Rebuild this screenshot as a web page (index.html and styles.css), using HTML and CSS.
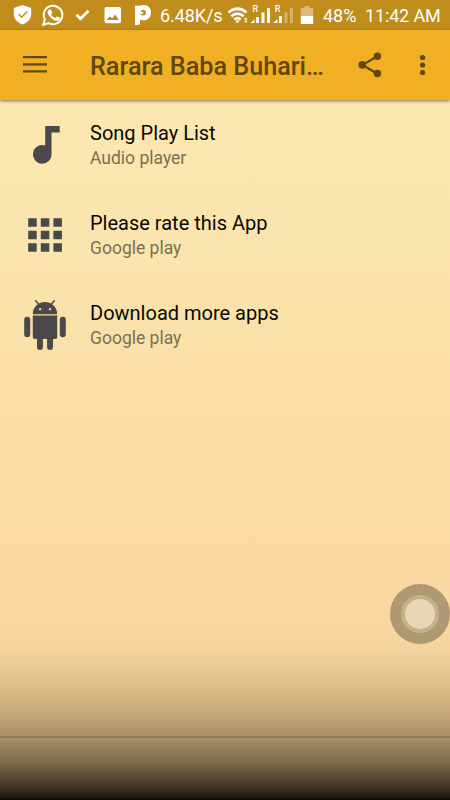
FILE: index.html
```
<!DOCTYPE html>
<html lang="en">
<head>
<meta charset="utf-8">
<title>Rarara Baba Buhari</title>
<link rel="stylesheet" href="styles.css">
</head>
<body>
<div class="screen">
  <header class="status">
    <svg class="notifications" width="160" height="30" viewBox="0 0 160 30">
      <path fill="#fff" d="M22.500 5L31.200 8V14C31.200 19 27.500 22.500 22.500 24.500C17.500 22.500 13.800 19 13.800 14V8Z"/>
      <path class="shield-check" d="M18.500 14.200l3.100 3 5.700-5.700"/>
      <path fill="none" stroke="#fff" stroke-width="2" d="M43.300 24.800l1.500-5.500a9.300 9.300 0 1 1 3.700 3.800Z"/>
      <path fill="#fff" d="M49.200 9.600h1.300q.5 0 .7.500l1 2.300q.1.500-.2.900l-.9 1.100q1.500 2.700 4.300 3.700l1.200-1.400q.3-.4.800-.2l2.300 1.100q.5.300.4.900-.4 2.300-3 2.500-2.600 0-5.600-2.600-3.600-3.200-4-5.900 0-1.900 1.700-2.900Z"/>
      <path fill="none" stroke="#fff" stroke-width="2.800" d="M76.500 14.700l4 4 8-8"/>
      <path fill="#fff" fill-rule="evenodd" d="M106.300 7h12.900q1.800 0 1.800 1.800v12.600q0 1.800-1.800 1.800h-12.900q-1.800 0-1.800-1.800V8.800q0-1.800 1.800-1.800ZM106.700 20h12.200l-3.700-5.500-3 4-2.300-2.300Z"/>
      <path fill="#fff" fill-rule="evenodd" d="M135 5.800h4.500Q141.500 5 144 5C148.300 5 151 8.300 151 12.700S148 20.300 144 20.300Q141.200 20.300 140 19.400V23q0 1.900-2 1.900h-3ZM143.100 9.800a2.900 2.900 0 1 0 .01 0Z"/>
      <path fill="#fff" d="M139.800 11.700h3.300v2h-3.300Z"/>
    </svg>
    <span class="speed">6.48K/s</span>
    <svg class="signals" width="92" height="30" viewBox="226 0 92 30">
      <g fill="none" stroke="#fff" stroke-width="2.700">
        <path d="M228.500 12.500q9-7.500 18 0"/>
        <path d="M231.300 16.300q6.200-5.200 12.400 0"/>
        <path d="M234.300 19.600q3.200-2.800 6.400 0"/>
      </g>
      <path fill="#fff" d="M235.500 20.900q2-1.500 4 0l-2 2.300ZM244 19.500l1.800-2.200 1.800 2.200ZM244 20.800h3.600l-1.800 2.200Z"/>
      <path fill="#fff" d="M250.500 23l4-3.500V23ZM256 17h3v6h-3ZM261.500 12.500h3V23h-3ZM267 8h3V23h-3ZM273 23l4.500-4V23Z"/>
      <path fill="#fff" d="M279 16h3V23h-3Z"/>
      <path fill="#fff" opacity=".35" d="M284.500 12.500h3V23h-3ZM290 8h3v15h-3Z"/>
      <text class="roaming" x="252.600" y="12">R</text>
      <text class="roaming" x="274.800" y="12">R</text>
      <path fill="#fff" opacity=".4" d="M304.500 6h5v2h3.700v8h-12.400V8h3.700Z"/>
      <path fill="#fff" d="M300.800 16h12.400v8h-12.400Z"/>
    </svg>
    <span class="battery">48%</span>
    <span class="clock">11:42 AM</span>
  </header>

  <div class="toolbar">
    <svg class="menu" width="24" height="18" viewBox="0 0 24 18">
      <path fill="#60470d" d="M0 0h24v2.300H0ZM0 7.300h24v2.300H0ZM0 14.300h24v2.300H0Z"/>
    </svg>
    <h1 class="title">Rarara Baba Buhari…</h1>
    <svg class="share" width="24" height="26" viewBox="0 0 24 26">
      <path fill="none" stroke="#60470d" stroke-width="2.200" d="M19.400 4.200L4.500 12.900l14.900 8.800"/>
      <g fill="#60470d"><circle cx="19.400" cy="4.300" r="3.700"/><circle cx="4.300" cy="12.900" r="3.800"/><circle cx="19.400" cy="21.500" r="3.700"/></g>
    </svg>
    <svg class="more" width="6" height="22" viewBox="0 0 6 22">
      <g fill="#60470d"><circle cx="2.600" cy="3.500" r="2.600"/><circle cx="2.600" cy="11" r="2.600"/><circle cx="2.600" cy="18.500" r="2.600"/></g>
    </svg>
  </div>

  <main class="list">
    <div class="row">
      <svg class="icon" width="90" height="90" viewBox="0 0 90 90">
        <path fill="#49494a" d="M45.200 26H59.700v6.500H51.500V54.300A9.300 9.300 0 1 1 45.200 45.600Z"/>
      </svg>
      <div class="label"><div class="name">Song Play List</div><div class="source">Audio player</div></div>
    </div>
    <div class="row">
      <svg class="icon" width="90" height="90" viewBox="0 0 90 90">
        <path fill="#49494a" d="M28.200 28.200h8.500v8.500h-8.500ZM40.800 28.200h8.500v8.500h-8.500ZM53.400 28.200h8.500v8.500h-8.500ZM28.200 40.800h8.500v8.500h-8.500ZM40.800 40.800h8.500v8.500h-8.500ZM53.400 40.800h8.500v8.500h-8.500ZM28.200 53.300h8.500v8.500h-8.500ZM40.800 53.300h8.500v8.500h-8.500ZM53.400 53.300h8.500v8.500h-8.500Z"/>
      </svg>
      <div class="label"><div class="name">Please rate this App</div><div class="source">Google play</div></div>
    </div>
    <div class="row">
      <svg class="icon" width="90" height="90" viewBox="0 0 90 90">
        <g fill="#49494a">
          <path fill-rule="evenodd" d="M32.800 34.200C33 27 38 22 45 22S57 27 57.200 34.200ZM40.100 27.900a1.200 1.200 0 1 0 .01 0ZM50 27.900a1.200 1.200 0 1 0 .01 0Z"/>
          <path d="M32.800 35.600H57.200V57q0 2-2 2H53v8a2.800 2.800 0 0 1-5.900 0v-8h-4.200v8a2.800 2.800 0 0 1-5.900 0v-8h-2.200q-2 0-2-2Z"/>
          <rect x="24.200" y="36.700" width="6" height="20.500" rx="3"/>
          <rect x="59.800" y="36.700" width="6" height="20.500" rx="3"/>
        </g>
        <path fill="none" stroke="#49494a" stroke-width="1.500" stroke-linecap="round" d="M39 24.500l-3.300-3.700M51 24.500l3.300-3.700"/>
      </svg>
      <div class="label"><div class="name">Download more apps</div><div class="source">Google play</div></div>
    </div>
  </main>
  <div class="divider"></div>
  <div class="assist"><div class="assist-core"></div></div>
</div>
</body>
</html>
```

FILE: styles.css
```
* { box-sizing: border-box; }
body { margin: 0; font-family: Roboto, sans-serif; }
.screen {
  position: relative;
  display: flex;
  flex-direction: column;
  width: 450px;
  height: 800px;
  overflow: hidden;
  background: linear-gradient(#fbe7b1 100px, #fbe6af 200px, #fae1aa 320px, #fadca5 450px, #fad9a1 600px, #f8d79e 640px, #edcd98 662px, #dfbf8c 685px, #c8ac7c 710px, #aa9069 736px, #a58b66 740px, #836f50 760px, #544632 779px, #2d261c 793px, #17120d 799px, #000 800px);
}
.status {
  display: flex;
  flex: none;
  height: 30px;
  background: #c08c1b;
  color: #fff;
  font-size: 18px;
  line-height: 32px;
  white-space: nowrap;
}
.speed { width: 66px; letter-spacing: -.1px; }
.battery { width: 43px; padding-left: 5px; }
.clock { margin-left: 4px; letter-spacing: -.15px; }
.shield-check { fill: none; stroke: #c08c1b; stroke-width: 1.500px; }
.roaming { fill: #fff; font: 500 9px Roboto, sans-serif; }
.toolbar {
  position: relative;
  display: flex;
  align-items: center;
  flex: none;
  height: 70px;
  padding: 0 24px 0 23px;
  background: #f1b023;
  box-shadow: 0 1px 3px rgba(0, 0, 0, .5);
}
.title {
  flex: none;
  width: 268px;
  margin: 4px 0 0 43px;
  color: #60470d;
  font-size: 25.200px;
  font-weight: 500;
  line-height: 32px;
  white-space: nowrap;
}
.share { flex: none; margin-right: 38px; }
.more { flex: none; margin-right: -3px; }
.menu { flex: none; }
.row { display: flex; height: 90px; }
.icon { flex: none; }
.label { padding-top: 20px; white-space: nowrap; }
.name { color: #080804; font-size: 20px; line-height: 26px; }
.source { color: #7a7052; font-size: 17.500px; line-height: 25px; }
.divider { height: 2px; margin-top: 366px; background: rgba(55, 45, 24, .22); }
.assist {
  position: absolute;
  left: 390px;
  top: 584px;
  display: flex;
  align-items: center;
  justify-content: center;
  width: 60px;
  height: 60px;
  border-radius: 50%;
  background: #ae9973;
}
.assist-core {
  width: 38px;
  height: 38px;
  border: 4px solid #c4b18a;
  border-radius: 50%;
  background: #e8d7b7;
}
```
